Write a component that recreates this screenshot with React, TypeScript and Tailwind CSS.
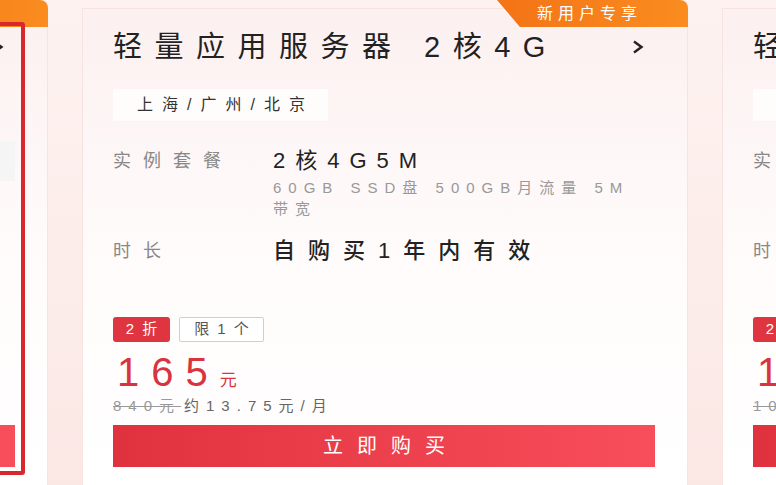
import React from "react";

type Plan = {
  title: string;
  spec: string;
  desc: string;
  price: string;
  original: string;
  monthly: string;
};

const plans: Plan[] = [
  {
    title: "轻量应用服务器 2核2G",
    spec: "2核2G4M",
    desc: "50GB SSD盘 300GB月流量 4M带宽",
    price: "99",
    original: "576元",
    monthly: "约8.25元/月",
  },
  {
    title: "轻量应用服务器 2核4G",
    spec: "2核4G5M",
    desc: "60GB SSD盘 500GB月流量 5M带宽",
    price: "165",
    original: "840元",
    monthly: "约13.75元/月",
  },
  {
    title: "轻量应用服务器 4核8G",
    spec: "4核8G12M",
    desc: "180GB SSD盘 1200GB月流量 12M带宽",
    price: "198",
    original: "1080元",
    monthly: "约16.5元/月",
  },
];

const NewUserTag = () => (
  <div className="absolute -top-[9px] -right-px flex h-[27px] w-[191px] items-center rounded-tr-lg bg-gradient-to-r from-[#f37316] to-[#fa8c20] pl-[40px] text-[16px] tracking-[5px] text-white [clip-path:polygon(0_0,100%_0,100%_100%,12%_100%)]">
    新用户专享
  </div>
);

const Chevron = () => (
  <svg width="14" height="14" viewBox="0 0 14 14" fill="none" className="mr-[10px]">
    <path d="M3 1.5 L10.5 7 L3 12.5" stroke="#222" strokeWidth="2.4" strokeLinejoin="miter" />
  </svg>
);

interface CardProps {
  plan: Plan;
  selected?: boolean;
}

const Card = ({ plan, selected }: CardProps) => (
  <div className="relative flex h-[480px] w-[606px] shrink-0 flex-col border border-[#f7e3e0] bg-gradient-to-b from-[#fcf0f0] via-[#fffbfb] to-white pb-[20px] pl-[30px] pr-[32px] pt-[20px]">
    <NewUserTag />

    <div className="flex h-[36px] items-center justify-between">
      <span className="text-[29px] leading-[36px] tracking-[12.5px] text-[#222]">{plan.title}</span>
      <Chevron />
    </div>

    <div className="mt-[24px] flex h-[32px] w-[215px] items-center bg-[#fffcfc] pl-[24px] text-[16px] tracking-[9px] text-[#333]">
      上海/广州/北京
    </div>

    {selected ? (
      <div className="mt-[20px] h-[40px] bg-[#f6f5f5]" />
    ) : (
      <>
        <div className="mt-[26px] flex">
          <div className="w-[160px] shrink-0 text-[18px] leading-[28px] tracking-[12px] text-[#888]">实例套餐</div>
          <div className="w-[360px]">
            <div className="text-[22px] leading-[28px] tracking-[10px] text-[#222]">{plan.spec}</div>
            <div className="mt-[2px] text-[15px] leading-[21px] tracking-[7px] text-[#999]">{plan.desc}</div>
          </div>
        </div>

        <div className="mt-[18px] flex">
          <div className="w-[160px] shrink-0 text-[18px] leading-[28px] tracking-[12px] text-[#888]">时长</div>
          <div className="text-[22px] font-medium leading-[28px] tracking-[13px] text-[#222]">自购买1年内有效</div>
        </div>

        <div className="mt-[52px] flex gap-[9px]">
          <span className="flex h-[25px] w-[57px] items-center justify-center rounded-[3px] bg-[#df3540] pl-[8px] text-[15px] tracking-[8px] text-white">
            2折
          </span>
          <span className="flex h-[25px] w-[85px] items-center justify-center rounded-[2px] border border-[#cfcfcf] bg-white pl-[8px] text-[15px] tracking-[8px] text-[#555]">
            限1个
          </span>
        </div>

        <div className="mt-[8px] flex items-baseline text-[#d8343f]">
          <span className="pl-[4px] text-[40px] leading-[44px] tracking-[12px]">{plan.price}</span>
          <span className="text-[17px]">元</span>
        </div>

        <div className="mt-[2px] text-[15px] leading-[20px] tracking-[7px]">
          <span className="text-[#999] line-through">{plan.original}</span>
          <span className="ml-[3px] text-[#666]">{plan.monthly}</span>
        </div>
      </>
    )}

    <button className="mt-auto flex h-[42px] w-full shrink-0 items-center justify-center bg-gradient-to-r from-[#e0323e] to-[#f84d5a] pl-[14px] text-[20px] tracking-[14px] text-white">
      立即购买
    </button>

    {selected && (
      <div className="pointer-events-none absolute bottom-[12px] left-[20px] right-[22px] top-[13px] rounded-[3px] border-4 border-[#d9272e]" />
    )}
  </div>
);

export default function App() {
  return (
    <div className="h-[485px] w-[776px] overflow-hidden bg-gradient-to-b from-[#fdf2f0] to-[#fbe8e5] font-['Liberation_Sans','Noto_Sans_CJK_SC',sans-serif]">
      <div className="-ml-[558px] flex gap-[34px] pt-[8px]">
        <Card plan={plans[0]} selected />
        <Card plan={plans[1]} />
        <Card plan={plans[2]} />
      </div>
    </div>
  );
}
